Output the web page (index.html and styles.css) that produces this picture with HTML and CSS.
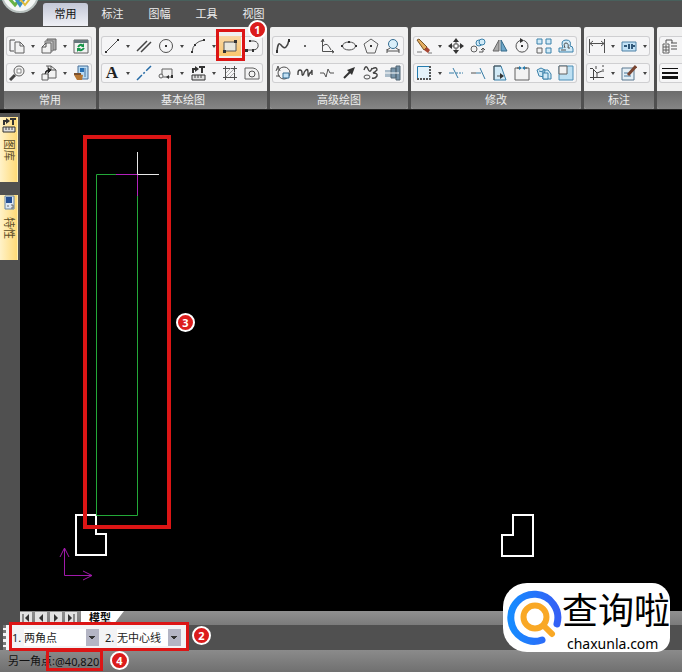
FILE: index.html
```html
<!DOCTYPE html>
<html lang="zh-CN">
<head>
<meta charset="utf-8">
<title>常用</title>
<link rel="stylesheet" href="styles.css">
</head>
<body>
<header class="topbar">
  <button class="app-button" aria-label="菜单">
    <svg width="40" height="40" viewBox="0 0 40 40"><circle cx="20" cy="20" r="18" fill="#f4f7f6" stroke="#b9c2c0" stroke-width="2"/><path d="M7 22l8 9 5-6" fill="none" stroke="#67b145" stroke-width="3"/><path d="M14 22l6 9 6-9" fill="none" stroke="#3a8fc4" stroke-width="3"/><path d="M20 25l5 6 8-10" fill="none" stroke="#e0bd3c" stroke-width="2"/></svg>
  </button>
  <nav class="tabs">
    <a class="tab tab-active" href="#">常用</a>
    <a class="tab" href="#">标注</a>
    <a class="tab" href="#">图幅</a>
    <a class="tab" href="#">工具</a>
    <a class="tab" href="#">视图</a>
  </nav>
</header>

<section class="ribbon">
  <div class="panel">
    <div class="panel-body">
      <div class="row">
        <button class="tool" aria-label="复制"><svg viewBox="0 0 16 16"><path d="M6 2H1v11h4" class="l"/><path d="M6 4h5l4 4v7H6zM11 4v4h4" class="p"/></svg></button><button class="caret" aria-label="更多"></button>
        <button class="tool" aria-label="粘贴"><svg viewBox="0 0 16 16"><path d="M6 4V1h9v11h-3" fill="#aaa" stroke="#666"/><path d="M4 6V3h8v10h-2" fill="#ccc" stroke="#777"/><path d="M1 9l4-4h5v10H1z" class="p"/><path d="M1 9h4V5" class="l"/></svg></button><button class="caret" aria-label="更多"></button>
        <button class="tool" aria-label="刷新"><svg viewBox="0 0 16 16"><path d="M1 2h14v13H1z" class="p"/><path d="M1 2h14v3H1z" fill="#66777c"/><path d="M5 9q3-4 5-1M11 10q-3 4-6 1" fill="none" stroke="#159447" stroke-width="2"/><path d="M11 5v4H8zM4 14v-4h4z" fill="#159447"/></svg></button>
      </div>
      <div class="row">
        <button class="tool" aria-label="缩放"><svg viewBox="0 0 16 16"><circle cx="10" cy="6" r="5" class="p"/><path d="M6 10l-5 5" stroke="#444" stroke-width="3"/><path d="M8 4h4v4H8z" fill="#fff" stroke="#888"/></svg></button><button class="caret" aria-label="更多"></button>
        <button class="tool" aria-label="块"><svg viewBox="0 0 16 16"><path d="M5 1h5l5 4v8H7V1" class="p"/><path d="M10 1v4h5" class="l"/><path d="M1 9h6v6H1z" class="p"/><path d="M4 9q0-4 4-4M7 3l3 2-3 3" stroke="#222" fill="#222"/></svg></button><button class="caret" aria-label="更多"></button>
        <button class="tool" aria-label="特性刷"><svg viewBox="0 0 16 16"><path d="M5 1h10v13H5z" fill="#b9dcf5" stroke="#496e97"/><path d="M7 3h4v4H7z" fill="#2670b5"/><path d="M12 3v9" stroke="#496e97"/><path d="M1 10l4-1 5 1-1 5H4z" fill="#b77733"/><path d="M1 9h7" stroke="#785030" stroke-width="2"/></svg></button>
      </div>
    </div>
    <h2 class="panel-title">常用</h2>
  </div>

  <div class="panel">
    <div class="panel-body">
      <div class="row">
        <button class="tool" aria-label="直线"><svg viewBox="0 0 16 16"><path d="M2 14L14 2" class="l"/><path d="M1 13h2v2H1zM13 1h2v2h-2z" class="k"/></svg></button><button class="caret" aria-label="更多"></button>
        <button class="tool" aria-label="平行线"><svg viewBox="0 0 16 16"><path d="M1 13L11 3M5 14L15 4" stroke="#444" stroke-width="1.5"/></svg></button>
        <button class="tool" aria-label="圆"><svg viewBox="0 0 16 16"><circle cx="8" cy="8" r="6.5" class="l"/><path d="M7 7h2v2H7z" class="k"/></svg></button><button class="caret" aria-label="更多"></button>
        <button class="tool" aria-label="圆弧"><svg viewBox="0 0 16 16"><path d="M2 14Q3 4 14 2" class="l"/><path d="M1 13h2v2H1zM13 1h2v2h-2zM4 6h2v2H4z" class="k"/></svg></button><button class="caret" aria-label="更多"></button>
        <span class="marked"><button class="tool tool-active" aria-label="矩形"><svg viewBox="0 0 16 16"><path d="M2 4h12v9H2z" fill="#e9e7de" stroke="#555"/><path d="M1 12h3v3H1zM12 2h3v3h-3z" class="k"/></svg></button><span class="frame frame-tool"></span><span class="badge badge-one">1</span></span>
        <button class="tool" aria-label="多段线"><svg viewBox="0 0 16 16"><path d="M6 3h4q5 1 4 6-1 3-5 3H2" class="l"/><path d="M5 2h2v2H5zM1 11h3v3H1zM8 11h2v3H8z" class="k"/></svg></button>
      </div>
      <div class="row">
        <button class="tool letter" aria-label="文字">A</button><button class="caret" aria-label="更多"></button>
        <button class="tool" aria-label="中心线"><svg viewBox="0 0 16 16"><path d="M1 15L15 1" stroke="#256aa5" stroke-width="1.5" stroke-dasharray="7 2 2 2"/></svg></button>
        <button class="tool" aria-label="轴"><svg viewBox="0 0 16 16"><path d="M4 10V4h10v8H5" class="p"/><circle cx="3" cy="11" r="2" class="p"/><path d="M8 12l3-2v4zM13 10h2v3h-2z" class="k"/></svg></button><button class="caret" aria-label="更多"></button>
        <button class="tool" aria-label="图库"><svg viewBox="0 0 16 16"><path d="M2 10h13v5H2z" fill="#ddd" stroke="#333"/><path d="M5 10v3M8 10v3M11 10v3" stroke="#444"/><path d="M3 8V4h3M9 2h6M12 2v6" stroke="#333" fill="none" stroke-width="2"/><path d="M5 1l4 3-4 3z" class="k"/></svg></button><button class="caret" aria-label="更多"></button>
        <button class="tool" aria-label="剖面线"><svg viewBox="0 0 16 16"><path d="M3.500 1v14M12.500 1v14M1 3.500h14M1 12.500h14" class="l"/><path d="M4 8l5-5M4 12l8-8M8 12l5-5" stroke="#aaa"/></svg></button>
        <button class="tool" aria-label="填充"><svg viewBox="0 0 16 16"><path d="M1 3h8q6 1 6 8v3H1z" class="p"/><circle cx="8" cy="9" r="3" class="l"/></svg></button>
      </div>
    </div>
    <h2 class="panel-title">基本绘图</h2>
  </div>

  <div class="panel">
    <div class="panel-body">
      <div class="row">
        <button class="tool" aria-label="样条"><svg viewBox="0 0 16 16"><path d="M2 13Q3 3 6 7T11 9 14 2" fill="none" stroke="#444" stroke-width="1.5"/><path d="M1 12h2v3H1zM13 1h2v3h-2z" class="k"/></svg></button>
        <button class="tool" aria-label="点"><svg viewBox="0 0 16 16"><path d="M7 7h2v2H7z" fill="#666"/></svg></button>
        <button class="tool" aria-label="公式曲线"><svg viewBox="0 0 16 16"><path d="M3.500 2v11.500H15M2 4l2-3 1 3M13 12l2 2-2 1M4 8Q8 3 12 12" class="l"/></svg></button>
        <button class="tool" aria-label="椭圆"><svg viewBox="0 0 16 16"><ellipse cx="8" cy="8" rx="6.5" ry="4" class="l"/><path d="M0 7h2v2H0zM14 7h2v2h-2zM7 3h2v2H7z" class="k"/></svg></button>
        <button class="tool" aria-label="多边形"><svg viewBox="0 0 16 16"><path d="M8 1l7 5-3 9H4L1 6z" class="p"/><path d="M7 7h2v2H7z" class="k"/></svg></button>
        <button class="tool" aria-label="局部放大"><svg viewBox="0 0 16 16"><circle cx="8" cy="6" r="4.5" fill="#d9effa" stroke="#336b91"/><path d="M5 10l-3 2M11 10l3 2M2 11v4M14 11v4M2 13h12" class="l"/></svg></button>
      </div>
      <div class="row">
        <button class="tool" aria-label="局部视图"><svg viewBox="0 0 16 16"><circle cx="9" cy="8" r="6" class="l"/><path d="M8 8h6v5H8z" fill="#c4e2f5" stroke="#336b91"/><path d="M1 6l2-5 2 5M2 4h2M1 11h4" class="l"/></svg></button>
        <button class="tool" aria-label="波浪线"><svg viewBox="0 0 16 16"><path d="M1 10V8q0-3 2-3t2 3 1 2 1-2 2-3 2 3 1 2 1-2 2-3v5" fill="none" stroke="#444" stroke-width="1.4"/></svg></button>
        <button class="tool" aria-label="双折线"><svg viewBox="0 0 16 16"><path d="M1 8h4l2 4 2-8 2 4h4" class="l"/></svg></button>
        <button class="tool" aria-label="箭头"><svg viewBox="0 0 16 16"><path d="M3 13l6-6" stroke="#333" stroke-width="2"/><path d="M14 2l-3 8-5-5z" class="k"/></svg></button>
        <button class="tool" aria-label="齿轮"><svg viewBox="0 0 16 16"><path d="M1 5q2-6 4-1t4-1M9 4q5-3 5 1-2 2-4 3 5 0 4 3-2 3-5 2" fill="none" stroke="#444" stroke-width="1.4"/><ellipse cx="4" cy="12" rx="3" ry="2" class="l"/></svg></button>
        <button class="tool" aria-label="孔轴"><svg viewBox="0 0 16 16"><path d="M0 5h7v7H0z" fill="#a9bbc9"/><path d="M6 3h5v10H6zM11 1h4v14h-4z" fill="#7895aa" stroke="#536775"/><path d="M0 8h14" stroke="#fff"/></svg></button>
      </div>
    </div>
    <h2 class="panel-title">高级绘图</h2>
  </div>

  <div class="panel">
    <div class="panel-body">
      <div class="row">
        <button class="tool" aria-label="删除"><svg viewBox="0 0 16 16"><path d="M1 2l2-1 8 8-3 3z" fill="#e4ad60" stroke="#765325"/><path d="M8 12l3-3 3 3-2 3z" fill="#a64633"/><path d="M1 14h5M12 15h4" stroke="#777"/></svg></button><button class="caret" aria-label="更多"></button>
        <button class="tool" aria-label="平移"><svg viewBox="0 0 16 16"><path d="M8 2v12M2 8h12" class="l"/><path d="M8 0l3 4H5zM8 16l3-4H5zM0 8l4-3v6zM16 8l-4-3v6z" class="k"/><path d="M6 6h4v4H6z" fill="#fff" stroke="#555"/></svg></button>
        <button class="tool" aria-label="平移复制"><svg viewBox="0 0 16 16"><circle cx="4" cy="11" r="3" class="p"/><circle cx="9" cy="5" r="3" class="b"/><circle cx="12" cy="4" r="3" class="b"/><path d="M9 14h4v-4M11 12l2-2 2 2" class="l"/></svg></button>
        <button class="tool" aria-label="镜像"><svg viewBox="0 0 16 16"><path d="M7 2v11H1z" fill="#aaa" stroke="#666"/><path d="M9 2v11h6z" fill="#6da6c9" stroke="#356987"/></svg></button>
        <button class="tool" aria-label="旋转"><svg viewBox="0 0 16 16"><path d="M6 2.500a6 6 0 1 0 4 0" class="l"/><path d="M6 0l4 2.500L6 5zM7 7h2v2H7z" class="k"/></svg></button>
        <button class="tool" aria-label="阵列"><svg viewBox="0 0 16 16"><path d="M1 1h5v5H1zM10 1h5v5h-5zM10 10h5v5h-5z" class="b"/><path d="M1 10h5v5H1z" class="p"/></svg></button>
        <button class="tool" aria-label="等距线"><svg viewBox="0 0 16 16"><path d="M1 14v-4h4Q2 2 8 2t4 6q3 0 3 3v3z" class="b"/><path d="M3 12h5M7 10q-2-5 1-5t2 5h2" class="l"/></svg></button>
      </div>
      <div class="row">
        <button class="tool" aria-label="裁剪"><svg viewBox="0 0 16 16"><path d="M1 1h14v14H1z" fill="#e4f2fa"/><path d="M1.500 15V1.500H15" fill="none" stroke="#257caf"/><path d="M14 1v13H1" fill="none" stroke="#555" stroke-width="2" stroke-dasharray="2 1"/></svg></button><button class="caret" aria-label="更多"></button>
        <button class="tool" aria-label="打断"><svg viewBox="0 0 16 16"><path d="M1 8h5M5 3l5 10" stroke="#367ca6"/><path d="M8 8h7" stroke="#367ca6" stroke-dasharray="2 1"/></svg></button>
        <button class="tool" aria-label="延伸"><svg viewBox="0 0 16 16"><path d="M1 8h5" class="l"/><path d="M6 8h5M10 3l5 11" stroke="#367ca6"/></svg></button>
        <button class="tool" aria-label="拉伸"><svg viewBox="0 0 16 16"><path d="M2 1h7l5 14H2z" class="b"/><path d="M2 15V1h7" class="l"/><path d="M5 11h4" class="l"/><path d="M8 8l4 3-4 3z" class="k"/></svg></button>
        <button class="tool" aria-label="合并"><svg viewBox="0 0 16 16"><path d="M5 3H1v12h14V3h-4" class="p"/><path d="M3 3h4M9 3h4" class="l"/><path d="M5 1l3 2-3 2zM11 1L8 3l3 2z" fill="#257caf"/></svg></button>
        <button class="tool" aria-label="分解"><svg viewBox="0 0 16 16"><path d="M1 5l4-2 4 2-1 7-5-1zM7 5h5l3 4v5H7z" class="b"/><path d="M7 8h5v6H7zM3 6l4 1" class="b"/></svg></button>
        <button class="tool" aria-label="缩放图形"><svg viewBox="0 0 16 16"><path d="M1 1h14v14H1z" fill="#bde0f3" stroke="#4c8eb5"/><path d="M1 1h8v8H1z" class="p"/></svg></button>
      </div>
    </div>
    <h2 class="panel-title">修改</h2>
  </div>

  <div class="panel">
    <div class="panel-body">
      <div class="row">
        <button class="tool" aria-label="尺寸标注"><svg viewBox="0 0 16 16"><path d="M.5 1v14M15.500 1v14M1 5.500h14M4 3L1 5.500 4 8M12 3l3 2.500L12 8" class="l"/></svg></button><button class="caret" aria-label="更多"></button>
        <button class="tool" aria-label="公差"><svg viewBox="0 0 16 16"><path d="M1 4h14v9H1z" fill="#c2e2f6" stroke="#4f81a5"/><path d="M3 8h3M8 6v5M11 6v5M10 8h4" stroke="#315879" stroke-width="2"/></svg></button><button class="caret" aria-label="更多"></button>
      </div>
      <div class="row">
        <button class="tool" aria-label="坐标标注"><svg viewBox="0 0 16 16"><path d="M4.500 4v11M1 12.500h14M1 3.500h3M7 1v3M13 1h2M14 4v3" stroke="#444" fill="none"/><path d="M5 5l3 3 5-2M8 8v4" stroke="#444" fill="none"/></svg></button><button class="caret" aria-label="更多"></button>
        <button class="tool" aria-label="标注编辑"><svg viewBox="0 0 16 16"><path d="M1 3h12v12H1z" fill="#e4eff6" stroke="#5a7890"/><path d="M3 8h4M3 11h7" stroke="#497799"/><path d="M15 1L7 10" stroke="#794531" stroke-width="3"/></svg></button><button class="caret" aria-label="更多"></button>
      </div>
    </div>
    <h2 class="panel-title">标注</h2>
  </div>

  <div class="panel panel-last">
    <div class="panel-body">
      <div class="row">
        <button class="tool" aria-label="图层"><svg viewBox="0 0 16 16"><path d="M4 5V2h6v3M9 5h6M9 8h6M9 11h6" class="l"/><path d="M1 6h6v9H1zM1 9h6M1 12h6M4 7v7" class="p"/></svg></button>
      </div>
      <div class="row">
        <button class="tool" aria-label="线宽"><svg viewBox="0 0 16 16"><path d="M0 3.500h16" stroke="#111"/><path d="M0 8h16" stroke="#111" stroke-width="2"/><path d="M0 12.500h16" stroke="#111" stroke-width="3"/></svg></button>
      </div>
    </div>
    <h2 class="panel-title"></h2>
  </div>
</section>

<main class="workspace">
  <aside class="side">
    <button class="side-tab"><svg width="16" height="16" viewBox="0 0 16 16"><path d="M2 10h12v5H2z" fill="#ddd" stroke="#333"/><path d="M5 10v3M8 10v3M11 10v3" stroke="#444"/><path d="M3 8V4h3M9 2h6M12 2v6" stroke="#333" fill="none" stroke-width="2"/><path d="M5 1l4 3-4 3z" class="k"/></svg><span>图库</span></button>
    <button class="side-tab"><svg width="16" height="16" viewBox="0 0 16 16"><path d="M4 1h9v13H4z" fill="#dce7f2" stroke="#6683a1"/><path d="M5 2h6v6H5z" fill="#244f95"/><path d="M6 11h2M10 10h2v3h-2" stroke="#666" fill="none"/></svg><span>特性</span></button>
  </aside>
  <div class="view">
    <div class="canvas">
      <svg class="drawing" fill="none">
        <path d="M56 405h20v19h10v21H56z" stroke="#fff" stroke-width="2"/>
        <path d="M493 405h20v41h-31v-21h11z" stroke="#fff" stroke-width="2"/>
        <path d="M96 64.500H76.500V405.500H117.500V86" stroke="#23a838"/>
        <path d="M96 64.500h21.500V86" stroke="#b321bc"/>
        <path d="M117.500 42v22.500H139" stroke="#e8e8e8"/>
        <path d="M44.500 438v27.500H72M40 447l4.500-9 4.500 9M63 461l9 4.500-9 4.500" stroke="#a01aaa"/>
      </svg>
      <span class="frame frame-shape"></span>
      <span class="badge badge-three">3</span>
    </div>
    <div class="sheets">
      <button class="nav" aria-label="首页"><svg viewBox="0 0 12 12"><path d="M3 2v8" stroke="#333"/><path d="M9 2v8L5 6z" fill="#333"/></svg></button>
      <button class="nav" aria-label="上一页"><svg viewBox="0 0 12 12"><path d="M8 2v8L4 6z" fill="#333"/></svg></button>
      <button class="nav" aria-label="下一页"><svg viewBox="0 0 12 12"><path d="M4 2v8l4-4z" fill="#333"/></svg></button>
      <button class="nav" aria-label="末页"><svg viewBox="0 0 12 12"><path d="M3 2v8l4-4z" fill="#333"/><path d="M9 2v8" stroke="#333"/></svg></button>
      <a class="sheet" href="#">模型</a>
    </div>
  </div>
</main>

<section class="options">
  <div class="option-bar">
    <label for="mode">1.</label>
    <select id="mode" class="mode"><option>两角点</option></select>
    <label for="center">2.</label>
    <select id="center" class="center"><option>无中心线</option></select>
    <span class="frame frame-options"></span>
    <span class="badge badge-two">2</span>
  </div>
</section>

<footer class="status">
  <label for="point">另一角点:</label>
  <span class="marked">
    <input id="point" class="point" value="@40,820">
    <span class="frame frame-point"></span>
    <span class="badge badge-four">4</span>
  </span>
</footer>

<div class="watermark">
  <svg width="56" height="60" viewBox="0 0 56 60" fill="none" stroke-linecap="round">
    <defs><linearGradient id="ring" x1="0" x2="1"><stop offset="0" stop-color="#168bff"/><stop offset="1" stop-color="#3460f5"/></linearGradient></defs>
    <path d="M36 52A23.500 23.500 0 1 1 51 36" stroke="url(#ring)" stroke-width="7"/>
    <circle cx="29" cy="29" r="11.500" stroke="#f9a825" stroke-width="6"/>
    <path d="M38 38l8 8" stroke="#f9a825" stroke-width="6"/>
  </svg>
  <div class="brand"><strong>查询啦</strong><span>chaxunla.com</span></div>
</div>
</body>
</html>
```
FILE: styles.css
```css
* { box-sizing: border-box; }
body {
  margin: 0;
  position: relative;
  min-height: 100vh;
  display: flex;
  flex-direction: column;
  overflow: hidden;
  background: #000;
  color: #222;
  font: 11px/16px "Noto Sans", "Noto Sans CJK SC", sans-serif;
}
button, input, select { font: inherit; color: inherit; margin: 0; padding: 0; border: 0; background: none; }
a { color: inherit; text-decoration: none; }
svg { display: block; }

.topbar { height: 26px; flex: none; display: flex; background: #505050; border-top: 1px solid #48605c; }
.app-button { width: 40px; height: 40px; margin-top: -27px; }
.tabs { display: flex; align-items: flex-end; gap: 2px; margin-left: 3px; }
.tab { width: 45px; height: 23px; padding-top: 3px; text-align: center; color: #eee; }
.tab-active { background: linear-gradient(#c3c7d6, #eff0f5); color: #111; border-radius: 3px 3px 0 0; }

.ribbon { flex: none; display: flex; gap: 3px; padding: 1px 0 0 4px; background: #505050; border-bottom: 1px solid #222; }
.panel { flex: none; background: #f0f0f0; border-radius: 2px; }
.panel-body { display: flex; flex-direction: column; gap: 7px; padding: 9px 4px 8px 2px; }
.panel-last { flex: 1 0 40px; }
.panel-last .panel-body { padding-right: 0; }
.row { display: flex; height: 20px; border-radius: 3px; background: #f5f5f6; box-shadow: inset 0 0 0 1px #cfcfd1; }
.panel-title { margin: 0; height: 18px; background: linear-gradient(#6c6c6c, #858585); color: #eee; font-size: 11px; line-height: 18px; font-weight: 400; text-align: center; border-radius: 0 0 2px 2px; }
.tool { width: 22px; height: 20px; display: flex; align-items: center; justify-content: center; }
.tool svg { width: 16px; height: 16px; }
.tool-active { background: linear-gradient(#f8d7a5, #fbc66c); }
.letter { font: bold 17px/20px "Liberation Serif", serif; }
.caret { width: 10px; height: 20px; display: flex; align-items: center; justify-content: center; }
.caret::after { content: ""; border: 2px solid transparent; border-top: 3px solid #444; border-bottom: 0; }
.l { fill: none; stroke: #505050; }
.p { fill: #f2f2f2; stroke: #606060; }
.b { fill: #d1eaf7; stroke: #3b81aa; }
.k { fill: #333; }

.workspace { flex: 1; display: flex; }
.side { width: 20px; margin-top: 3px; padding-top: 4px; display: flex; flex-direction: column; gap: 13px; background: #505050; }
.side-tab { width: 18px; height: 65px; display: flex; flex-direction: column; align-items: center; gap: 6px; background: linear-gradient(90deg, #fff2c8, #ffda77); border-right: 1px solid #fff0b0; color: #5c4d28; }
.side-tab span { writing-mode: vertical-rl; text-orientation: sideways; }
.view { flex: 1; display: flex; flex-direction: column; }
.canvas { flex: 1; position: relative; }
.drawing { position: absolute; width: 100%; height: 100%; }
.sheets { height: 14px; display: flex; align-items: center; gap: 3px; background: linear-gradient(#909090, #7b7b7b); }
.nav { width: 12px; height: 12px; background: #e2e2e2; }
.nav svg { width: 12px; height: 12px; }
.sheet { width: 43px; height: 14px; margin-left: 1px; padding-left: 8px; background: #fff; color: #111; font-weight: 700; line-height: 14px; clip-path: polygon(0 0, 100% 0, 75% 100%, 0 100%); }

.options { height: 25px; flex: none; padding-left: 3px; background: #505050; }
.option-bar { position: relative; width: 186px; height: 25px; display: flex; align-items: center; padding-left: 9px; background: #f3f3f5; border-left: 3px dotted #777; }
.option-bar label { width: 12px; margin-left: -3px; }
.option-bar select {
  appearance: none;
  height: 17px;
  line-height: 17px;
  background-color: #fff;
  background-image: conic-gradient(from 315deg at 50% 80%, #333 90deg, transparent 0), linear-gradient(#b4b5c4, #b4b5c4);
  background-size: 6px 4px, 13px 100%;
  background-position: right 4px center, right;
  background-repeat: no-repeat;
}
.option-bar .mode { width: 75px; margin-right: 9px; }
.option-bar .center { width: 64px; }

.status { height: 22px; flex: none; display: flex; align-items: center; padding-left: 8px; background: linear-gradient(#8b8b8b, #707070); color: #111; }
.point { width: 48px; height: 18px; display: block; }

.marked { position: relative; }
.frame { position: absolute; border: 3px solid #dc1515; pointer-events: none; }
.frame-tool { left: -3px; top: -7px; width: 29px; height: 32px; z-index: 1; }
.frame-shape { left: 63px; top: 25px; width: 88px; height: 394px; border-width: 4px; }
.frame-options { left: 3px; top: -3px; width: 180px; height: 29px; }
.frame-point { left: -9px; top: -3px; width: 57px; height: 22px; }
.badge { position: absolute; z-index: 2; width: 19px; height: 19px; border: 2px solid #fff; border-radius: 50%; background: #dc1c1c; color: #fff; font-weight: 700; line-height: 15px; text-align: center; }
.badge-one { left: 29px; top: -16px; }
.badge-three { left: 156px; top: 203px; }
.badge-two { left: 186px; top: 1px; }
.badge-four { left: 55px; top: -1px; }

.watermark { position: absolute; right: 12px; bottom: 20px; width: 167px; height: 69px; padding: 5px 0 0 3px; display: flex; background: #fff; border-radius: 24px 18px 14px 24px; color: #000; z-index: 3; }
.brand { display: flex; flex-direction: column; white-space: nowrap; }
.brand strong { font: 400 36px/48px "Liberation Sans", "Noto Sans CJK SC", sans-serif; }
.brand span { padding-left: 5px; font-size: 14px; line-height: 16px; }
```
